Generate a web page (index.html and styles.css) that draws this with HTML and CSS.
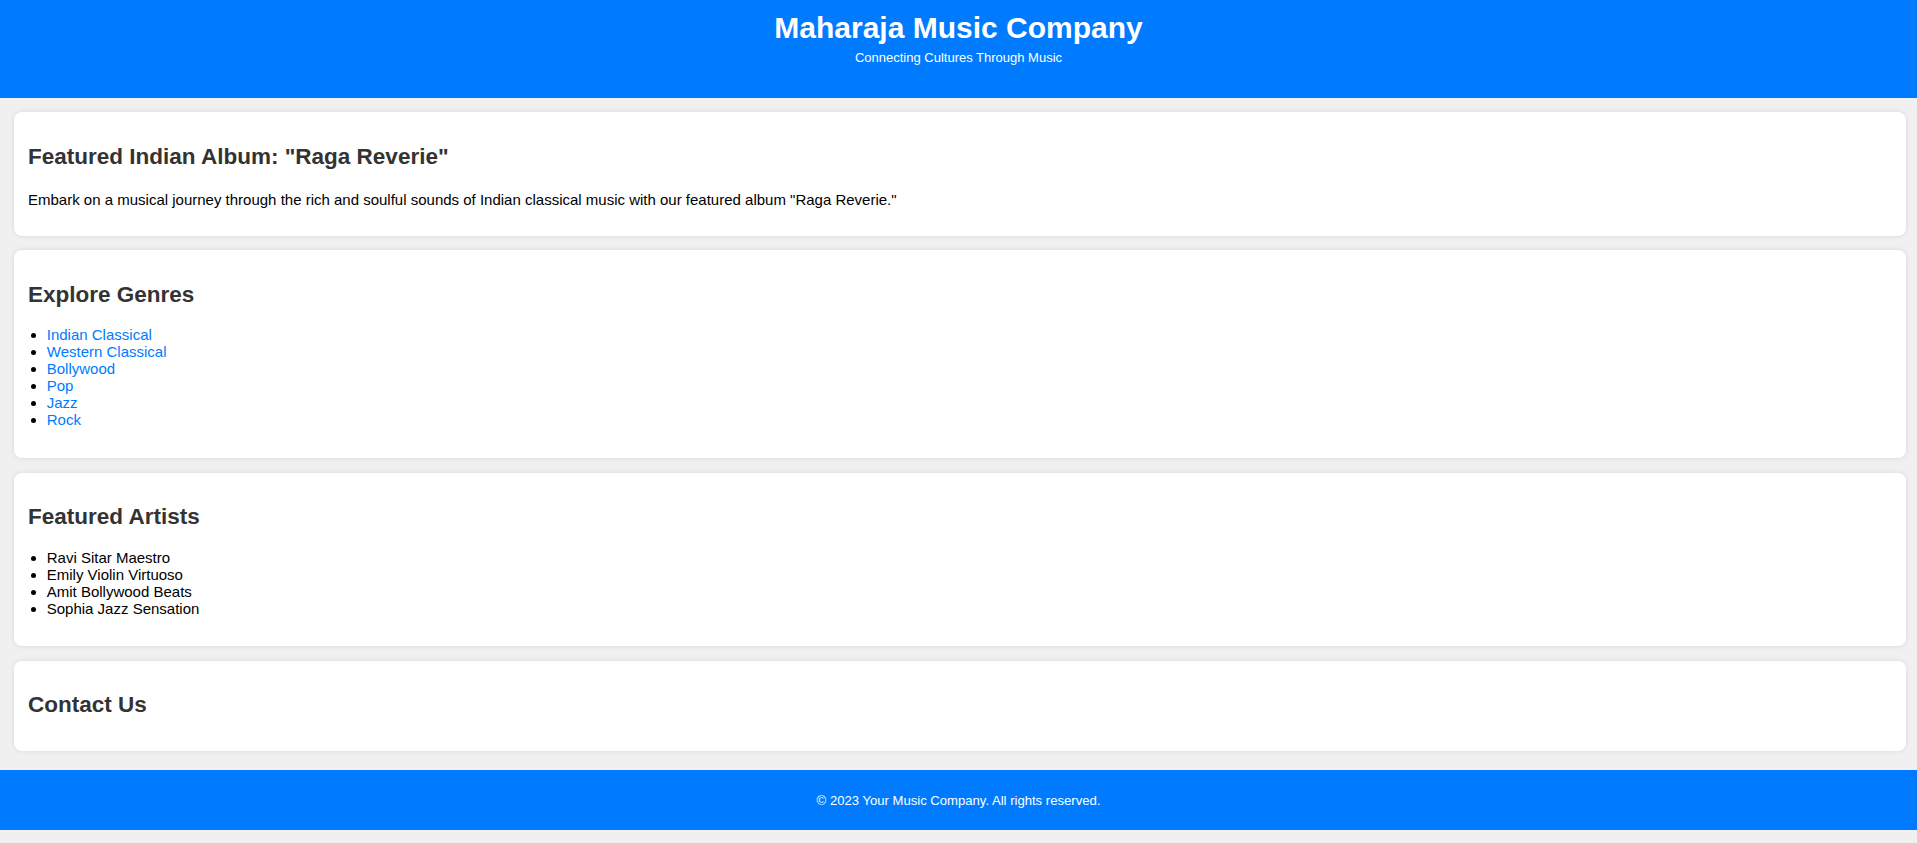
FILE: index.html
```html
<!DOCTYPE html>
<html lang="en">
<head>
<meta charset="utf-8">
<title>Maharaja Music Company</title>
<link rel="stylesheet" href="styles.css">
</head>
<body>
<header class="site-header">
  <h1 class="site-title">Maharaja Music Company</h1>
  <p class="tagline">Connecting Cultures Through Music</p>
</header>
<main class="content">
  <section class="card">
    <h2 class="card-title">Featured Indian Album: "Raga Reverie"</h2>
    <p class="card-text">Embark on a musical journey through the rich and soulful sounds of Indian classical music with our featured album "Raga Reverie."</p>
  </section>
  <section class="card">
    <h2 class="card-title">Explore Genres</h2>
    <ul class="list">
      <li><a class="link" href="#">Indian Classical</a></li>
      <li><a class="link" href="#">Western Classical</a></li>
      <li><a class="link" href="#">Bollywood</a></li>
      <li><a class="link" href="#">Pop</a></li>
      <li><a class="link" href="#">Jazz</a></li>
      <li><a class="link" href="#">Rock</a></li>
    </ul>
  </section>
  <section class="card">
    <h2 class="card-title">Featured Artists</h2>
    <ul class="list">
      <li>Ravi Sitar Maestro</li>
      <li>Emily Violin Virtuoso</li>
      <li>Amit Bollywood Beats</li>
      <li>Sophia Jazz Sensation</li>
    </ul>
  </section>
  <section class="card">
    <h2 class="card-title">Contact Us</h2>
  </section>
</main>
<footer class="site-footer">
  <p class="copyright">&copy; 2023 Your Music Company. All rights reserved.</p>
</footer>
</body>
</html>
```

FILE: styles.css
```css
html, body {
  margin: 0;
  padding: 0;
}
body {
  background: #f0f0f0;
  font-family: "Liberation Sans", Arial, sans-serif;
  font-size: 15px;
  color: #000;
}
.site-header {
  background: #007bff;
  color: #fff;
  text-align: center;
  padding: 11px 0 32px;
  height: 55px;
}
.site-title {
  margin: 0;
  font-size: 30px;
  font-weight: bold;
  line-height: 34px;
}
.tagline {
  margin: 5px 0 0;
  font-size: 13px;
  line-height: 15px;
}
.content {
  padding: 14px 11px 19.3px 14px;
  display: flex;
  flex-direction: column;
  gap: 14.7px;
}
.card {
  background: #fff;
  border-radius: 8px;
  box-shadow: 0 0 5px rgba(0, 0, 0, 0.1);
  padding: 14px;
}
.card-title {
  color: #333;
  font-size: 22.5px;
  font-weight: bold;
  margin: 17.5px 0 18.7px;
  line-height: 26px;
}
.card-text {
  margin: 21px 0 14px;
  font-size: 15px;
  line-height: 17px;
}
.list {
  margin: 0 0 15.5px;
  padding-left: 18.75px;
  line-height: 17px;
}
.link {
  color: #007bff;
  text-decoration: none;
}
.site-footer {
  background: #007bff;
  color: #fff;
  text-align: center;
  height: 60px;
  display: flex;
  align-items: center;
  justify-content: center;
  margin-bottom: 12px;
}
.copyright {
  margin: 0;
  font-size: 13.1px;
}
```
